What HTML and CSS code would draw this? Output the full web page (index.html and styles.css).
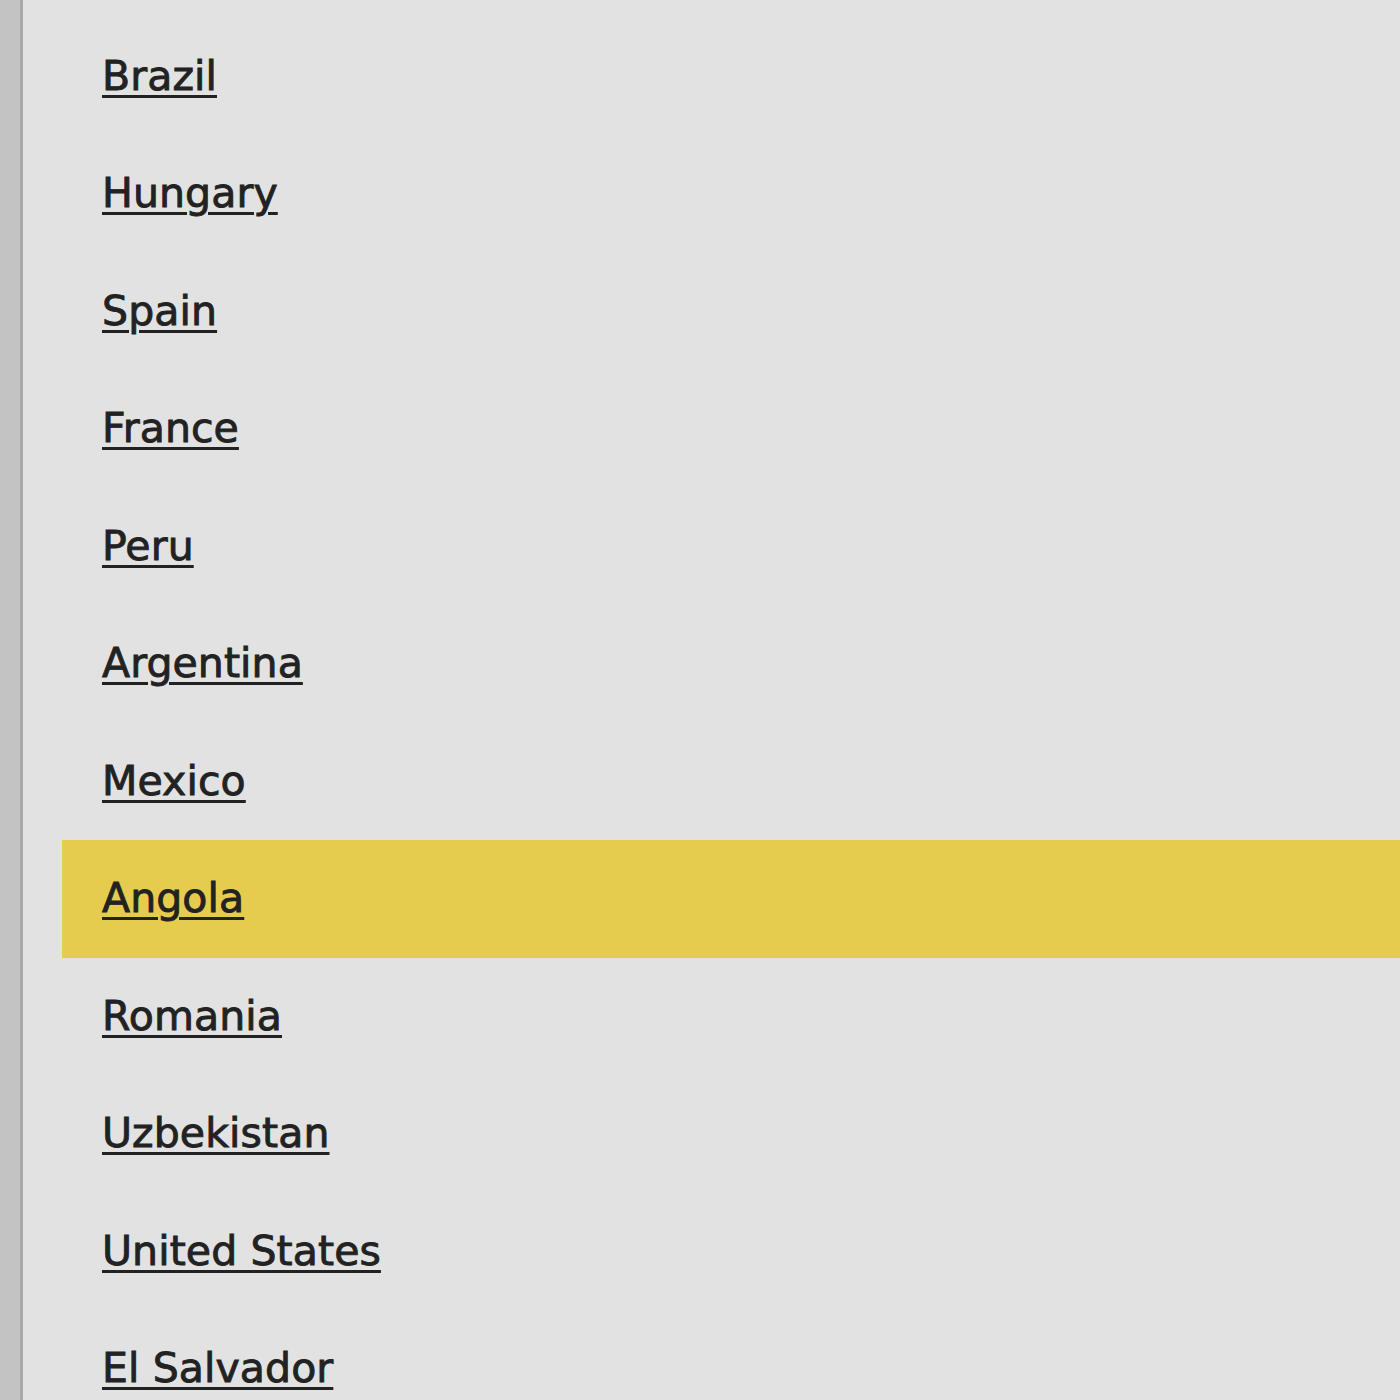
FILE: index.html
```html
<!DOCTYPE html>
<html>
<head>
<meta charset="utf-8">
<link rel="stylesheet" href="styles.css">
</head>
<body>
<div class="app">
  <div class="sidebar"></div>
  <ul class="list">
    <li class="item"><a href="#">Brazil</a></li>
    <li class="item"><a href="#">Hungary</a></li>
    <li class="item"><a href="#">Spain</a></li>
    <li class="item"><a href="#">France</a></li>
    <li class="item"><a href="#">Peru</a></li>
    <li class="item"><a href="#">Argentina</a></li>
    <li class="item"><a href="#">Mexico</a></li>
    <li class="item selected"><a href="#">Angola</a></li>
    <li class="item"><a href="#">Romania</a></li>
    <li class="item"><a href="#">Uzbekistan</a></li>
    <li class="item"><a href="#">United States</a></li>
    <li class="item"><a href="#">El Salvador</a></li>
  </ul>
</div>
</body>
</html>
```
FILE: styles.css
```css
html, body {
  margin: 0;
  padding: 0;
  height: 100%;
  overflow: hidden;
  background: #e2e2e2;
}
.app {
  display: flex;
  height: 1400px;
}
.sidebar {
  width: 20px;
  flex: none;
  background: #c3c3c3;
  border-right: 3px solid #a9a9a9;
}
.list {
  flex: 1;
  list-style: none;
  margin: 0 0 0 39px;
  padding: 17.5px 0 0 0;
  background: #e2e2e2;
}
.item {
  height: 117.5px;
  line-height: 117.5px;
  padding-left: 40px;
  font-family: "DejaVu Sans", sans-serif;
  font-size: 41px;
  letter-spacing: 0.1px;
  white-space: nowrap;
}
.item a {
  color: #222222;
  -webkit-text-stroke: 0.9px #222222;
  text-decoration: underline;
  text-decoration-thickness: 3px;
  text-underline-offset: 5px;
}
.item.selected {
  background: #e5cc4f;
}
```
